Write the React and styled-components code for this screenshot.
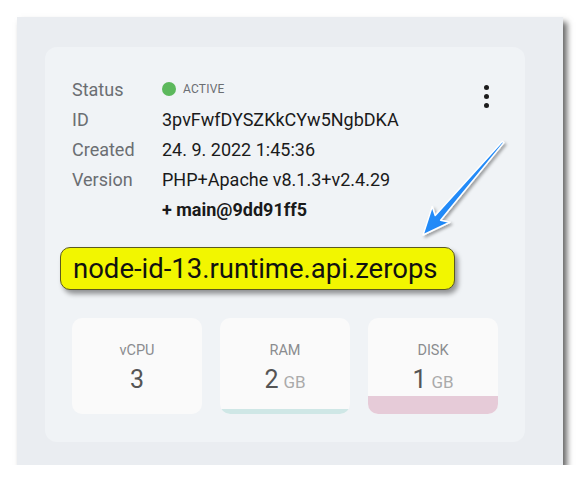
import React from "react";
import styled, { createGlobalStyle } from "styled-components";

const GlobalStyle = createGlobalStyle`
  body {
    margin: 0;
    background: #ffffff;
    font-family: Roboto, "Liberation Sans", Arial, sans-serif;
  }
`;

// Styled Components
const Frame = styled.div`
  width: 546px;
  height: 448px;
  margin: 17px 0 0 17px;
  background-color: #eaedf1;
  box-shadow: 4px 5px 6px rgba(0, 0, 0, 0.6);
  padding: 30px 0 0 28px;
  box-sizing: border-box;
`;

const Card = styled.div`
  position: relative;
  width: 480px;
  height: 395px;
  background-color: #f0f3f6;
  border-radius: 12px;
  padding: 27px 0 0 27px;
  box-sizing: border-box;
`;

const InfoGrid = styled.div`
  display: grid;
  grid-template-columns: 90px 1fr;
  grid-auto-rows: 30px;
  align-items: center;
  font-size: 18px;
`;

const Label = styled.div`
  color: #6b6e72;
`;

const Value = styled.div`
  color: #1a1a1a;
  font-weight: ${(p) => (p.$bold ? 700 : 400)};
`;

const Status = styled.div`
  display: flex;
  align-items: center;
  gap: 7px;
  font-size: 12px;
  color: #6b6e72;
  letter-spacing: 0.2px;
`;

const Dot = styled.span`
  width: 14px;
  height: 14px;
  border-radius: 50%;
  background-color: #5cb85c;
`;

const MenuButton = styled.div`
  position: absolute;
  top: 38px;
  right: 36px;
  display: flex;
  flex-direction: column;
  gap: 4px;

  span {
    width: 5px;
    height: 5px;
    border-radius: 50%;
    background: #1c1c1c;
  }
`;

const Highlight = styled.div`
  display: inline-flex;
  align-items: center;
  height: 43px;
  margin: 23px 0 0 -12px;
  padding: 0 12px;
  width: 395px;
  box-sizing: border-box;
  background-color: #f2f600;
  border: 1px solid #5c5a20;
  border-radius: 10px;
  box-shadow: 3px 4px 5px rgba(0, 0, 0, 0.4);
  font-size: 27.5px;
  color: #111;
  white-space: nowrap;
`;

const Stats = styled.div`
  display: flex;
  gap: 18px;
  margin-top: 28px;
`;

const StatCard = styled.div`
  position: relative;
  width: 130px;
  height: 96px;
  border-radius: 10px;
  overflow: hidden;
  background-color: #fafafa;
  display: flex;
  flex-direction: column;
  align-items: center;
  padding-top: 24px;
  box-sizing: border-box;

  &::after {
    content: "";
    position: absolute;
    left: 0;
    right: 0;
    bottom: 0;
    height: ${(p) => p.$fill || 0}px;
    background-color: ${(p) => p.$color || "transparent"};
  }
`;

const StatLabel = styled.div`
  font-size: 14.5px;
  color: #8a8c8f;
`;

const StatValue = styled.div`
  margin-top: 6px;
  font-size: 25px;
  color: #555;

  small {
    font-size: 17px;
    color: #aaa;
    margin-left: 5px;
  }
`;

const Arrow = styled.svg`
  position: absolute;
  left: 0;
  top: 0;
  overflow: visible;
  pointer-events: none;
`;

const stats = [
  { label: "vCPU", value: "3" },
  { label: "RAM", value: "2", unit: "GB", fill: 5, color: "#cfe7e6" },
  { label: "DISK", value: "1", unit: "GB", fill: 18, color: "#e6cbd8" },
];

const App = () => {
  return (
    <>
      <GlobalStyle />
      <Frame>
        <Card>
          <InfoGrid>
            <Label>Status</Label>
            <Status>
              <Dot />
              ACTIVE
            </Status>
            <Label>ID</Label>
            <Value>3pvFwfDYSZKkCYw5NgbDKA</Value>
            <Label>Created</Label>
            <Value>24. 9. 2022 1:45:36</Value>
            <Label>Version</Label>
            <Value>PHP+Apache v8.1.3+v2.4.29</Value>
            <span />
            <Value $bold>+ main@9dd91ff5</Value>
          </InfoGrid>

          <MenuButton>
            <span />
            <span />
            <span />
          </MenuButton>

          <Highlight>node-id-13.runtime.api.zerops</Highlight>

          <Stats>
            {stats.map((s) => (
              <StatCard key={s.label} $fill={s.fill} $color={s.color}>
                <StatLabel>{s.label}</StatLabel>
                <StatValue>
                  {s.value}
                  {s.unit && <small>{s.unit}</small>}
                </StatValue>
              </StatCard>
            ))}
          </Stats>

          <Arrow width="480" height="395">
            <defs>
              <linearGradient id="ag" x1="0" y1="0" x2="1" y2="1">
                <stop offset="0" stopColor="#3a9cff" />
                <stop offset="1" stopColor="#0a78f0" />
              </linearGradient>
              <filter id="as" x="-20%" y="-20%" width="140%" height="140%">
                <feDropShadow dx="2" dy="2" stdDeviation="1.5" floodColor="#000" floodOpacity="0.35" />
              </filter>
            </defs>
            <polygon
              points="458.8,95.6 395.6,173.2 404.8,175.2 378,188 387.2,159.6 390.2,168.6 457.2,94.4"
              fill="url(#ag)"
              stroke="#fff"
              strokeWidth="1.5"
              strokeLinejoin="round"
              filter="url(#as)"
            />
          </Arrow>
        </Card>
      </Frame>
    </>
  );
};

export default App;
